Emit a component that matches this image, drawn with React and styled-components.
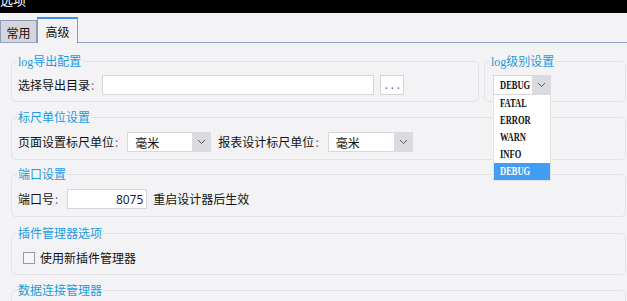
import React from "react";
import styled, { createGlobalStyle } from "styled-components";

const GlobalStyle = createGlobalStyle`
  html, body {
    margin: 0;
    padding: 0;
    background: #f3f3f6;
    overflow: hidden;
  }
  body {
    font-family: "Noto Sans CJK SC", "Noto Sans", sans-serif;
    font-size: 12px;
    color: #111;
  }
`;

const Window = styled.div`
  width: 627px;
  height: 301px;
  overflow: hidden;
  background: #f3f3f6;
`;

const TitleBar = styled.div`
  height: 13px;
  background: #000;
  overflow: hidden;
`;

const TitleText = styled.div`
  color: #fff;
  font-size: 13px;
  line-height: 13px;
  margin-top: -7px;
`;

const TabBar = styled.div`
  height: 29px;
  display: flex;
  align-items: flex-end;
  border-bottom: 1px solid #91a2c6;
`;

const Tab = styled.div`
  box-sizing: border-box;
  display: flex;
  align-items: center;
  justify-content: center;
  font-size: 12px;
  width: ${(p) => (p.$active ? "41px" : "37px")};
  height: ${(p) => (p.$active ? "26px" : "22px")};
  margin-bottom: ${(p) => (p.$active ? "-1px" : "0")};
  background: ${(p) => (p.$active ? "#f3f3f6" : "#d5d6db")};
  border: 1px solid #8e9bb8;
  border-top: ${(p) => (p.$active ? "2px solid #3b8fe6" : "1px solid #8e9bb8")};
  border-bottom: none;
  position: relative;
  z-index: ${(p) => (p.$active ? 1 : 0)};
  padding-top: ${(p) => (p.$active ? "0" : "1px")};
`;

const Content = styled.div`
  padding: 11px 1px 0 11px;
`;

const TopRow = styled.div`
  display: flex;
  gap: 5px;
  align-items: stretch;
`;

const Group = styled.fieldset`
  box-sizing: border-box;
  margin: ${(p) => p.$mt || 0}px 0 0 0;
  padding: ${(p) => p.$pt || 8}px 6px ${(p) => p.$pb || 7}px 5px;
  border: 1px solid #e2e2e6;
  border-radius: 5px;
  min-width: 0;
  width: ${(p) => (p.$width ? `${p.$width}px` : "auto")};
  flex: ${(p) => (p.$width ? "none" : "1")};
  position: relative;
`;

const Legend = styled.legend`
  padding: 0 1px;
  height: 14px;
  font-size: 12px;
  line-height: 14px;
  color: #1a9be0;
  white-space: nowrap;
`;

const Latin = styled.span`
  font-family: "Liberation Serif", "DejaVu Serif", serif;
  font-size: 12px;
  line-height: 1;
`;

const Row = styled.div`
  display: flex;
  align-items: center;
  height: 20px;
  padding-left: ${(p) => p.$indent || 1}px;
`;

const Label = styled.span`
  white-space: nowrap;
  line-height: 20px;
  margin-left: ${(p) => p.$before || 0}px;
  margin-right: ${(p) => p.$gap || 0}px;
`;

const Colon = styled.span`
  color: #7a5a9a;
  margin-left: 1px;
`;

const TextInput = styled.div`
  box-sizing: border-box;
  width: ${(p) => p.$width}px;
  height: 20px;
  background: #fff;
  border: 1px solid #d6d6d8;
  display: flex;
  align-items: center;
  justify-content: ${(p) => (p.$right ? "flex-end" : "flex-start")};
  padding: 0 3px;
  color: #1d1d5c;
  font-family: "Noto Sans", sans-serif;
  font-size: 12px;
`;

const BrowseButton = styled.div`
  box-sizing: border-box;
  width: 24px;
  height: 20px;
  margin-left: 6px;
  background: #fff;
  border: 1px solid #d6d6d8;
  display: flex;
  align-items: center;
  justify-content: center;
  font-family: "Liberation Mono", monospace;
  font-size: 10px;
  color: #6b3f8f;
  padding-top: 2px;
`;

const ComboBox = styled.div`
  display: flex;
  height: 20px;
  width: ${(p) => p.$width}px;
  position: relative;
`;

const ComboText = styled.div`
  box-sizing: border-box;
  flex: 1;
  background: #fff;
  border: 1px solid #d8d8da;
  border-right: none;
  display: flex;
  align-items: center;
  padding-left: ${(p) => p.$pad || 6}px;
  font-size: 12px;
  overflow: hidden;
`;

const ComboArrow = styled.div`
  width: 19px;
  background: #dadbe0;
  display: flex;
  align-items: center;
  justify-content: center;
`;

const Narrow = styled.span`
  display: inline-block;
  font-family: "Liberation Serif", "DejaVu Serif", serif;
  font-size: 12.5px;
  font-weight: 700;
  line-height: 1;
  transform: scaleX(0.68);
  transform-origin: left center;
  white-space: nowrap;
`;

const DropList = styled.div`
  position: absolute;
  top: 20px;
  left: 0;
  width: 100%;
  box-sizing: border-box;
  background: #fff;
  border: 1px solid #e2e2e4;
  border-top: none;
  z-index: 5;
`;

const DropItem = styled.div`
  height: 17px;
  display: flex;
  align-items: center;
  padding-left: 6px;
  color: ${(p) => (p.$selected ? "#fff" : "#111")};
  background: ${(p) => (p.$selected ? "#429ef5" : "transparent")};
`;

const CheckBox = styled.span`
  box-sizing: border-box;
  width: 12px;
  height: 12px;
  border: 1px solid #9a9a9c;
  background: #f6f6f8;
  margin-right: 5px;
`;

const Chevron = () => (
  <svg width="9" height="6" viewBox="0 0 9 6">
    <polyline points="1,1 4.5,4.5 8,1" fill="none" stroke="#555" strokeWidth="1" />
  </svg>
);

const Combo = ({ width, text, pad, children }) => (
  <ComboBox $width={width}>
    <ComboText $pad={pad}>{text}</ComboText>
    <ComboArrow>
      <Chevron />
    </ComboArrow>
    {children}
  </ComboBox>
);

const levels = ["FATAL", "ERROR", "WARN", "INFO", "DEBUG"];

export default function App() {
  return (
    <Window>
      <GlobalStyle />
      <TitleBar>
        <TitleText>选项</TitleText>
      </TitleBar>
      <TabBar>
        <Tab>常用</Tab>
        <Tab $active>高级</Tab>
      </TabBar>
      <Content>
        <TopRow>
          <Group $width={468} $pt={7} $pb={6}>
            <Legend>
              <Latin>log</Latin>导出配置
            </Legend>
            <Row>
              <Label $gap={8}>
                选择导出目录<Colon>:</Colon>
              </Label>
              <TextInput $width={272} />
              <BrowseButton>...</BrowseButton>
            </Row>
          </Group>
          <Group $pt={7} $pb={6}>
            <Legend>
              <Latin>log</Latin>级别设置
            </Legend>
            <Row $indent={3}>
              <Combo width={58} text={<Narrow>DEBUG</Narrow>} pad={6}>
                <DropList>
                  {levels.map((l) => (
                    <DropItem key={l} $selected={l === "DEBUG"}>
                      <Narrow>{l}</Narrow>
                    </DropItem>
                  ))}
                </DropList>
              </Combo>
            </Row>
          </Group>
        </TopRow>

        <Group $mt={8}>
          <Legend>标尺单位设置</Legend>
          <Row>
            <Label $gap={9}>
              页面设置标尺单位<Colon>:</Colon>
            </Label>
            <Combo width={84} text="毫米" pad={7} />
            <Label $before={7} $gap={9}>
              报表设计标尺单位<Colon>:</Colon>
            </Label>
            <Combo width={85} text="毫米" pad={7} />
          </Row>
        </Group>

        <Group $mt={7}>
          <Legend>端口设置</Legend>
          <Row>
            <Label $gap={9}>
              端口号<Colon>:</Colon>
            </Label>
            <TextInput $width={80} $right>
              8075
            </TextInput>
            <Label $before={6}>重启设计器后生效</Label>
          </Row>
        </Group>

        <Group $mt={9} $pb={6}>
          <Legend>插件管理器选项</Legend>
          <Row $indent={6}>
            <CheckBox />
            <Label>使用新插件管理器</Label>
          </Row>
        </Group>

        <Group $mt={8}>
          <Legend>数据连接管理器</Legend>
          <Row />
        </Group>
      </Content>
    </Window>
  );
}
